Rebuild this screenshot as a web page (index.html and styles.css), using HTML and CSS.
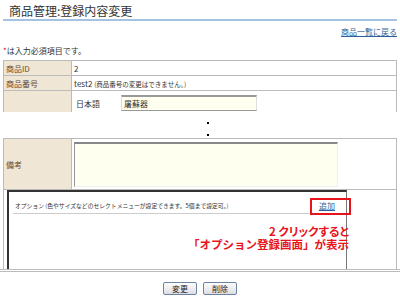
FILE: index.html
```html
<!DOCTYPE html>
<html>
<head>
    <meta charset="utf-8">
    <title>商品管理:登録内容変更</title>
    <link rel="stylesheet" href="styles.css">
</head>
<body>
    <div class="page">
        <h1>商品管理:登録内容変更</h1>
        <div class="back"><a href="#">商品一覧に戻る</a></div>
        <p class="note"><span class="req">*</span>は入力必須項目です。</p>

        <table class="form form-top">
            <tr>
                <th>商品ID</th>
                <td>2</td>
            </tr>
            <tr>
                <th>商品番号</th>
                <td>test2 <small>(商品番号の変更はできません。)</small></td>
            </tr>
            <tr class="cut">
                <th></th>
                <td>
                    <div class="lang-row">
                        <span class="lang">日本語</span>
                        <input type="text" class="field" value="屠蘇器">
                    </div>
                </td>
            </tr>
        </table>

        <div class="ellipsis"><span></span><span></span></div>

        <table class="form form-bottom">
            <tr class="memo">
                <th>備考</th>
                <td><textarea class="memo-box"></textarea></td>
            </tr>
            <tr>
                <td colspan="2" class="option-cell">
                    <div class="option-box">
                        <div class="option-head">
                            <span>オプション (色やサイズなどのセレクトメニューが設定できます。5個まで設定可。)</span>
                            <a href="#">追加</a>
                        </div>
                    </div>
                </td>
            </tr>
        </table>
        <div class="rule"></div>

        <div class="buttons">
            <button type="button">変更</button>
            <button type="button">削除</button>
        </div>

        <!-- annotation -->
        <div class="mark"></div>
        <div class="callout"><span class="tight">2 クリックすると</span><br>「オプション登録画面」が表示</div>
    </div>
</body>
</html>
```

FILE: styles.css
```css
body {
    margin: 0;
    font-family: "Noto Sans CJK JP", "Liberation Sans", sans-serif;
    color: #333;
    background: #fff;
}
.page {
    position: relative;
    width: 400px;
    height: 300px;
    padding: 0 3px;
    box-sizing: border-box;
    overflow: hidden;
}
h1 {
    margin: 0;
    height: 21px;
    padding-left: 6px;
    font-size: 12px;
    line-height: 22px;
    font-weight: normal;
    color: #333;
    border-bottom: 2px solid #a4c2e2;
    box-sizing: border-box;
}
.back {
    margin-top: 5px;
    text-align: right;
    font-size: 8px;
    line-height: 12px;
}
.back a, .option-head a {
    color: #2f5f96;
}
.note {
    margin: 7px 0 0;
    font-size: 8px;
    line-height: 12px;
}
.req {
    color: #e00;
}

/* form tables */
.form {
    width: 100%;
    border-collapse: collapse;
    font-size: 8px;
}
.form th, .form td {
    border: 1px solid #bbb;
    padding: 0 2px;
    text-align: left;
    font-weight: normal;
    vertical-align: middle;
}
.form th {
    width: 63px;
    background: #efe6d6;
    color: #6b4a2a;
}
.form-top {
    margin-top: 3px;
}
.form-top tr {
    height: 15px;
}
.form small {
    font-size: 6.5px;
}
.form-top .cut th, .form-top .cut td {
    border-bottom: none;
    height: 21px;
    vertical-align: top;
}
.lang-row {
    display: flex;
    align-items: center;
    gap: 21px;
    padding: 4px 0 0 2px;
}
.field {
    width: 136px;
    height: 16px;
    margin: 0;
    padding: 0 2px;
    box-sizing: border-box;
    border: 1px solid #ddd;
    border-top: 2px solid #999;
    border-bottom-color: #999;
    background: #fffff0;
    font-family: inherit;
    font-size: 8px;
    color: #333;
}

.ellipsis {
    height: 26px;
    display: flex;
    flex-direction: column;
    align-items: flex-start;
    gap: 10px;
    padding: 10px 0 0 204px;
    box-sizing: border-box;
}
.ellipsis span {
    width: 2px;
    height: 2px;
    background: #000;
}

.form-bottom {
    border-bottom: none;
}
.memo th {
    height: 50px;
}
.memo td {
    padding: 3px 2px 2px;
    vertical-align: top;
}
.memo-box {
    display: block;
    width: 264px;
    height: 45px;
    margin: 0;
    padding: 0;
    box-sizing: border-box;
    border: 1px solid #eee;
    border-top: 2px solid #888;
    border-left-color: #999;
    background: #fffff0;
    resize: none;
}
.form .option-cell {
    padding: 0 0 0 3px;
    vertical-align: top;
    border-bottom: none;
}
.option-box {
    width: 340px;
    height: 79px;
    box-sizing: border-box;
    border: 1px solid #777;
    border-top: 2px solid #333;
    border-left: 2px solid #333;
    border-bottom: none;
    padding: 5px 4px 0;
}
.option-head {
    display: flex;
    justify-content: space-between;
    align-items: center;
    height: 16px;
    border-bottom: 1px solid #ccc;
    padding: 0 7px 0 2px;
    font-size: 5.8px;
}
.option-head a {
    font-size: 8px;
}
.rule {
    margin: 0 -3px;
    height: 1px;
    border-top: 1px solid #bbb;
    border-bottom: 1px solid #bbb;
}

.buttons {
    display: flex;
    justify-content: center;
    gap: 6px;
    margin-top: 10px;
}
.buttons button {
    width: 34px;
    height: 13px;
    padding: 0;
    border: 1px solid #6c82a0;
    border-radius: 2px;
    background: linear-gradient(#ffffff, #dcdce4);
    font-family: inherit;
    font-size: 8px;
    line-height: 11px;
    color: #222;
}

.mark {
    position: absolute;
    left: 310px;
    top: 198px;
    width: 41px;
    height: 17px;
    box-sizing: border-box;
    border: 2px solid #e8141c;
}
.callout {
    position: absolute;
    right: 51px;
    top: 225px;
    text-align: right;
    color: #e8141c;
    font-weight: bold;
    font-size: 11.5px;
    line-height: 13px;
}
.tight {
    font-feature-settings: "palt";
}
```
